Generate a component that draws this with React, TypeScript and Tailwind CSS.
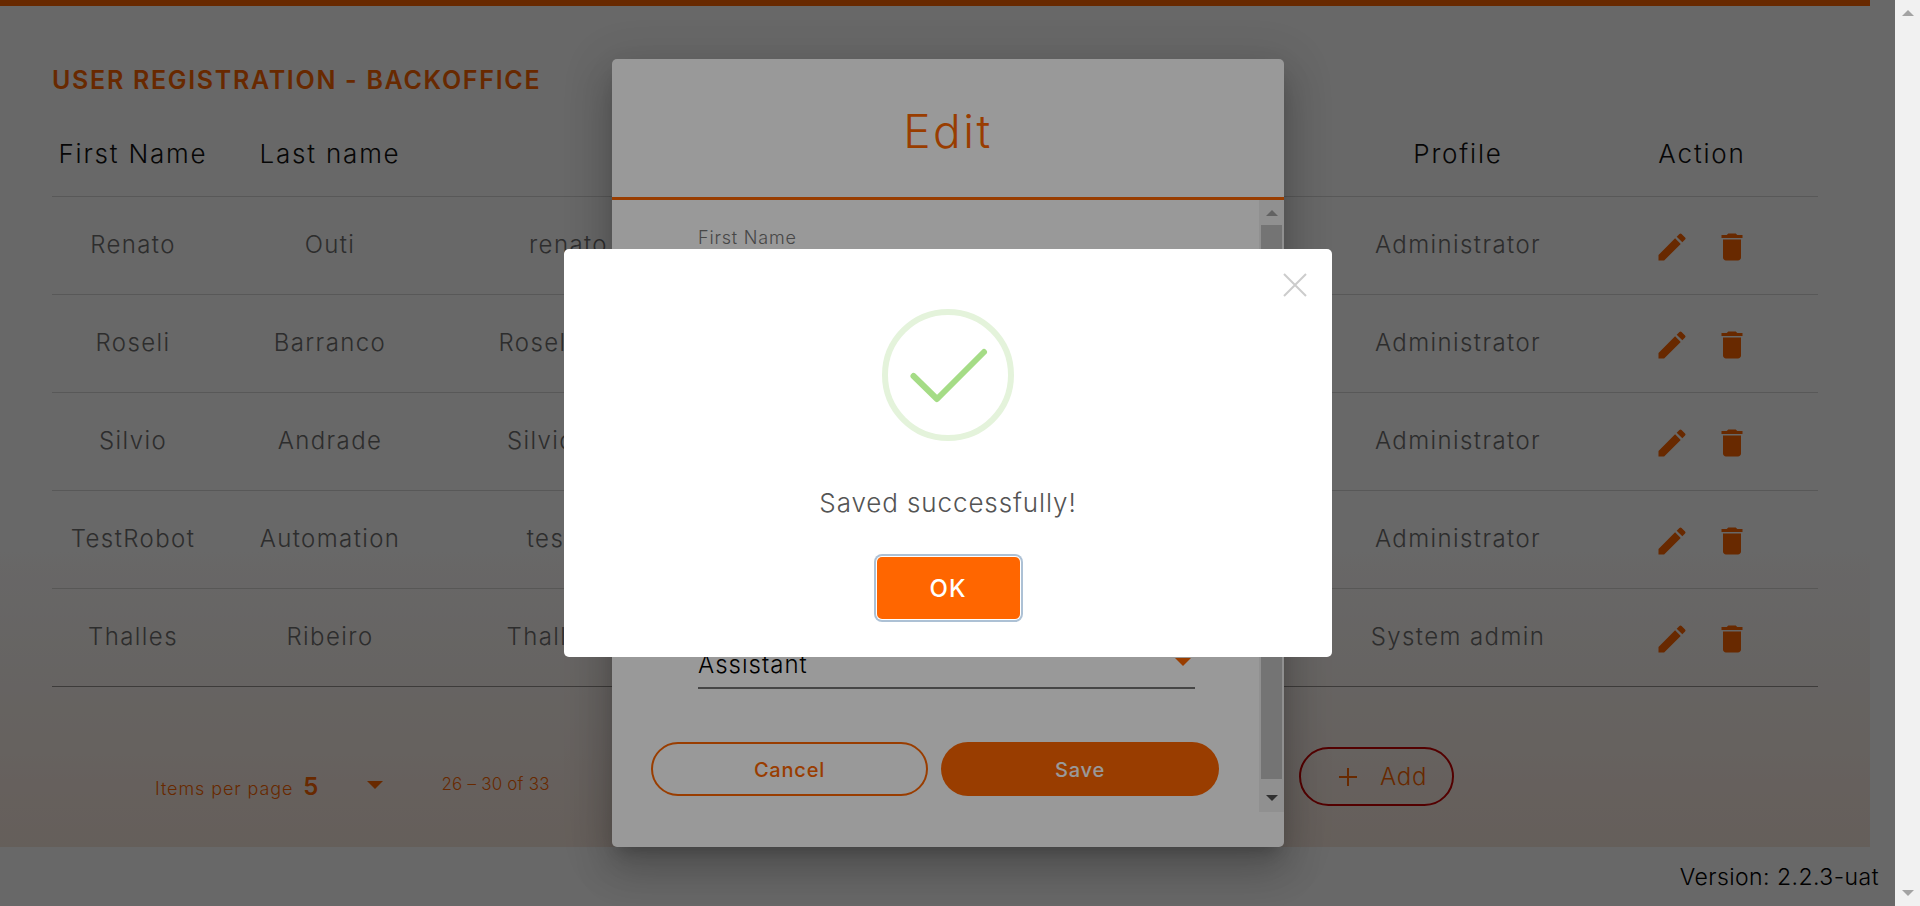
import React from 'react';
import { MdEdit, MdDelete } from 'react-icons/md';

const USERS = [
  { first: 'Renato', last: 'Outi', email: 'renato.outi@backoffice.com.br', profile: 'Administrator' },
  { first: 'Roseli', last: 'Barranco', email: 'Roseli.barranco@backoffice.com.br', profile: 'Administrator' },
  { first: 'Silvio', last: 'Andrade', email: 'Silvio.andrade@backoffice.com.br', profile: 'Administrator' },
  { first: 'TestRobot', last: 'Automation', email: 'testrobot01@backoffice.com.br', profile: 'Administrator' },
  { first: 'Thalles', last: 'Ribeiro', email: 'Thalles.ribeiro@backoffice.com.br', profile: 'System admin' },
];

const GRID = 'grid grid-cols-[162px_232px_883px_258px_230px] items-center';

const App: React.FC = () => {
  return (
    <div className="relative flex h-[906px] w-[1920px] overflow-hidden bg-[#f1f1f1] font-['Inter',sans-serif] font-light">
      {/* page */}
      <div className="relative flex h-full w-[1895px] flex-col bg-white">
        <main className="flex h-[847px] w-[1870px] flex-col bg-gradient-to-b from-white from-65% to-[#fae9df]">
          <div className="h-1.5 bg-[#ff6600]" />
          <div className="px-[52px]">
            <h1 className="mt-[60px] text-[25px] leading-7 font-semibold tracking-[1.7px] text-[#ff6600]">USER REGISTRATION - BACKOFFICE</h1>

            <div className={`${GRID} mt-[5px] h-[98px] border-b border-black/15 pt-[12px] text-[26px] tracking-[1.8px] text-[#111]`}>
              <div className="text-center">First Name</div>
              <div className="text-center">Last name</div>
              <div />
              <div className="text-center">Profile</div>
              <div className="text-center">Action</div>
            </div>

            {USERS.map((u, i) => (
              <div key={u.first} className={`${GRID} h-[98px] border-b text-[24px] tracking-[1.4px] text-[#707070] ${i === USERS.length - 1 ? 'border-black/40' : 'border-black/15'}`}>
                <div className="mb-[2px] text-center">{u.first}</div>
                <div className="mb-[2px] text-center">{u.last}</div>
                <div className="mb-[2px] pr-[333px] text-center whitespace-nowrap">{u.email}</div>
                <div className="mb-[2px] text-center">{u.profile}</div>
                <div className="mt-[2px] flex justify-center gap-6 text-[#ff6600]">
                  <MdEdit size={36} />
                  <MdDelete size={36} />
                </div>
              </div>
            ))}

            <div className="flex items-center pt-[60px] pl-[103px] text-[#ff6600]">
              <span className="mt-[24px] text-[18px] tracking-[0.9px]">Items per page</span>
              <span className="mt-[20px] ml-[10px] text-[24px] font-semibold">5</span>
              <span className="mt-[16px] ml-[49px] h-0 w-0 border-x-[8px] border-t-[8px] border-x-transparent border-t-[#ff6600]" />
              <span className="mt-[16px] ml-[58px] text-[17px] tracking-[0.2px]">26 – 30 of 33</span>
              <button className="mr-[364px] ml-auto flex h-[59px] w-[155px] items-center rounded-full border-2 border-[#cc0000] pl-[37px] text-[24px] tracking-[0.7px]">
                <svg width="20" height="20" viewBox="0 0 20 20" className="mr-[22px]">
                  <path d="M10 1v18M1 10h18" stroke="currentColor" strokeWidth="2" fill="none" />
                </svg>
                Add
              </button>
            </div>
          </div>
        </main>

        <footer className="flex h-[59px] items-center justify-end bg-white pt-[1px] pr-4 text-[23px] tracking-[0.45px] text-black">Version: 2.2.3-uat</footer>

        {/* material backdrop */}
        <div className="absolute inset-0 bg-black/32" />

        {/* edit dialog */}
        <div className="absolute top-[59px] left-[612px] flex h-[788px] w-[672px] flex-col rounded-[5px] bg-white shadow-[0_11px_15px_-7px_rgba(0,0,0,0.2),0_24px_38px_3px_rgba(0,0,0,0.14),0_9px_46px_8px_rgba(0,0,0,0.12)]">
          <div className="flex h-[141px] items-center justify-center border-b-[3px] border-[#ff6600] pt-[7px] text-[46px] tracking-[2.5px] text-[#ff6600]">Edit</div>
          <div className="flex h-[612px]">
            <div className="flex-1 pl-[39px] pr-[40px]">
              <div className="mt-[28px] pl-[47px] text-[18px] leading-5 tracking-[0.8px] text-[#777]">First Name</div>
              <div className="mt-[403px] mr-[24px] ml-[47px] flex h-[38px] items-start justify-between border-b-2 border-[#757575] text-[24px] leading-7 tracking-[1px] text-black">
                Assistant
                <span className="mt-[7px] mr-[4px] h-0 w-0 border-x-[8px] border-t-[8px] border-x-transparent border-t-[#ff6600]" />
              </div>
              <div className="mt-[53px] flex gap-[13px]">
                <button className="h-[54px] w-[277px] rounded-full border-2 border-[#ff6600] pt-[1px] text-[20px] font-medium tracking-[0.8px] text-[#ff6600]">Cancel</button>
                <button className="h-[54px] w-[278px] rounded-full bg-[#ff6600] pt-[1px] text-[20px] font-medium tracking-[0.8px] text-white">Save</button>
              </div>
            </div>
            <div className="flex w-[25px] flex-col items-center bg-[#f1f1f1]">
              <span className="mt-[10px] h-0 w-0 border-x-[6px] border-b-[6px] border-x-transparent border-b-[#a3a3a3]" />
              <span className="mt-[9px] h-[554px] w-[21px] bg-[#c1c1c1]" />
              <span className="mt-[16px] h-0 w-0 border-x-[6px] border-t-[6px] border-x-transparent border-t-[#505050]" />
            </div>
          </div>
        </div>

        {/* alert backdrop */}
        <div className="absolute inset-0 bg-black/40" />

        {/* alert */}
        <div className="absolute top-[249px] left-[564px] flex h-[408px] w-[768px] flex-col items-center rounded-[5px] bg-white">
          <svg width="24" height="24" viewBox="0 0 24 24" className="absolute top-[24px] right-[25px] text-[#cccccc]">
            <path d="M1 1l22 22M23 1L1 23" stroke="currentColor" strokeWidth="2" fill="none" />
          </svg>
          <svg width="132" height="132" viewBox="0 0 132 132" className="mt-[60px]">
            <circle cx="66" cy="66" r="63" fill="none" stroke="#e4f3db" strokeWidth="6" />
            <path d="M31.5 67l23.5 23 47-47" fill="none" stroke="#a5dc86" strokeWidth="6" strokeLinecap="round" strokeLinejoin="round" />
          </svg>
          <p className="mt-[44px] text-[26px] leading-9 tracking-[0.9px] text-[#545454]">Saved successfully!</p>
          <button className="mt-[36px] h-[62px] w-[143px] rounded-[5px] bg-[#ff6600] pt-[2px] text-[24px] font-medium tracking-[1px] text-white shadow-[0_0_0_1px_#fff,0_0_0_3px_rgba(50,100,150,0.4)]">OK</button>
        </div>
      </div>

      {/* window scrollbar */}
      <div className="flex h-full w-[25px] flex-col items-center justify-between py-[10px]">
        <span className="h-0 w-0 border-x-[6px] border-b-[6px] border-x-transparent border-b-[#a3a3a3]" />
        <span className="h-0 w-0 border-x-[6px] border-t-[6px] border-x-transparent border-t-[#a3a3a3]" />
      </div>
    </div>
  );
};

export default App;
